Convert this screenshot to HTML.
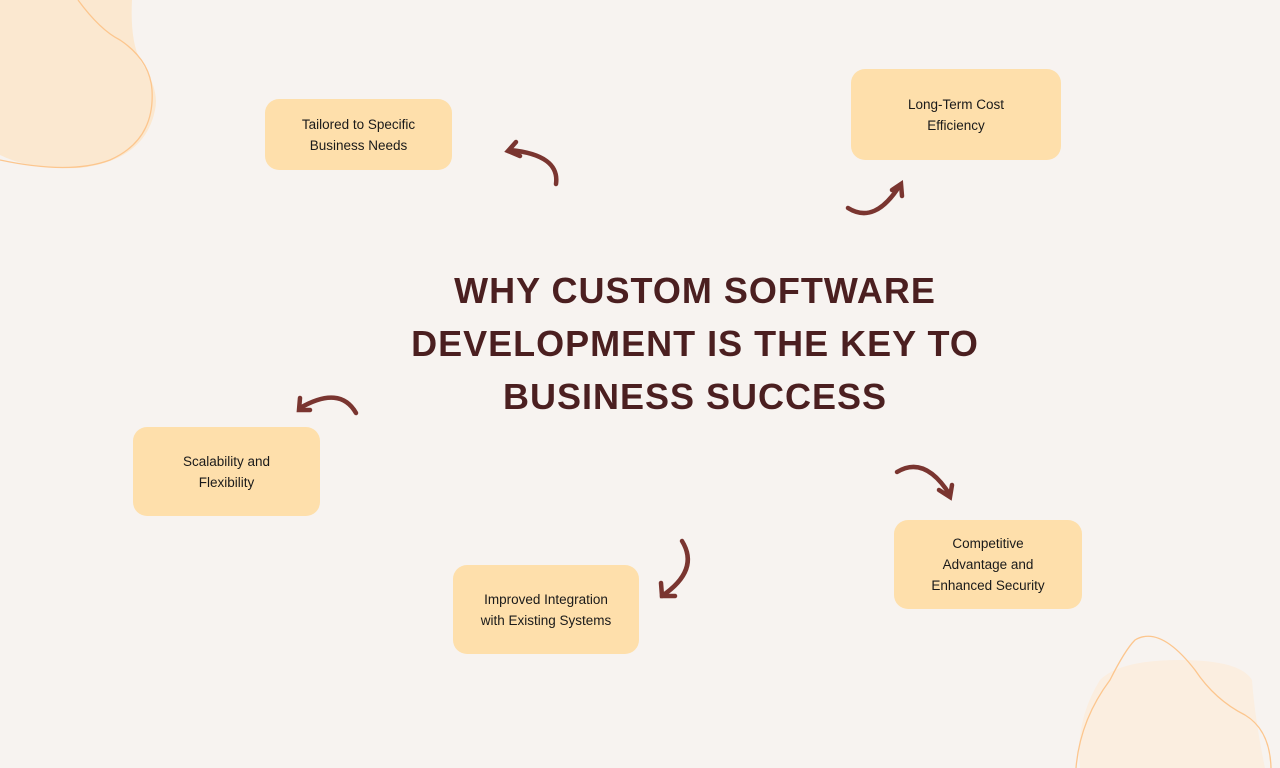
<!DOCTYPE html>
<html><head><meta charset="utf-8"><style>
html,body{margin:0;padding:0}
body{width:1280px;height:768px;background:#f7f3f0;position:relative;overflow:hidden;font-family:"Comic Sans MS","Liberation Sans",sans-serif}
.box{position:absolute;background:#fedfab;border-radius:14px;display:flex;align-items:center;justify-content:center;text-align:center;font-size:13.5px;line-height:21px;color:#1a1a1a}
.title{position:absolute;left:380px;top:264px;width:630px;text-align:center;font-family:"Liberation Sans",sans-serif;font-weight:bold;font-size:36px;line-height:53px;color:#4b1f20;letter-spacing:1px}
svg{position:absolute;left:0;top:0}
</style></head><body>
<svg width="1280" height="768">
<path d="M0,0 L132,0 Q130,40 140,60 Q160,90 155,110 Q145,160 80,168 Q30,170 0,155 Z" fill="#fbe8d0"/>
<path d="M78,0 Q100,30 120,40 Q150,60 152,90 Q155,140 110,160 Q70,175 0,160" fill="none" stroke="#fcc68e" stroke-width="1.3"/>
<path d="M1100,680 Q1120,660 1180,660 Q1240,660 1252,680 Q1255,720 1265,768 L1080,768 Q1075,720 1100,680 Z" fill="#fbeee0"/>
<path d="M1076,768 Q1080,720 1110,680 Q1125,650 1135,640 Q1160,625 1195,670 Q1215,700 1245,715 Q1270,730 1271,768" fill="none" stroke="#fcc68e" stroke-width="1.3"/>
<g fill="none" stroke="#7a3530" stroke-width="4.5" stroke-linecap="round">
<path d="M556,184 Q560,155 510,150"/><path d="M516,142 L508,151 L520,156"/>
<path d="M848,208 Q875,225 900,185"/><path d="M892,190 L901,184 L902,196"/>
<path d="M356,413 Q340,385 300,408"/><path d="M300,398 L299,410 L310,410"/>
<path d="M897,472 Q925,455 950,495"/><path d="M939,490 L950,497 L952,485"/>
<path d="M682,541 Q700,570 662,596"/><path d="M661,583 L662,596 L675,596"/>
</g>
</svg>
<div class="box" style="left:265px;top:99px;width:187px;height:71px">Tailored to Specific<br>Business Needs</div>
<div class="box" style="left:851px;top:69px;width:210px;height:91px">Long-Term Cost<br>Efficiency</div>
<div class="box" style="left:133px;top:427px;width:187px;height:89px">Scalability and<br>Flexibility</div>
<div class="box" style="left:453px;top:565px;width:186px;height:89px">Improved Integration<br>with Existing Systems</div>
<div class="box" style="left:894px;top:520px;width:188px;height:89px">Competitive<br>Advantage and<br>Enhanced Security</div>
<div class="title">WHY CUSTOM SOFTWARE<br>DEVELOPMENT IS THE KEY TO<br>BUSINESS SUCCESS</div>
</body></html>
